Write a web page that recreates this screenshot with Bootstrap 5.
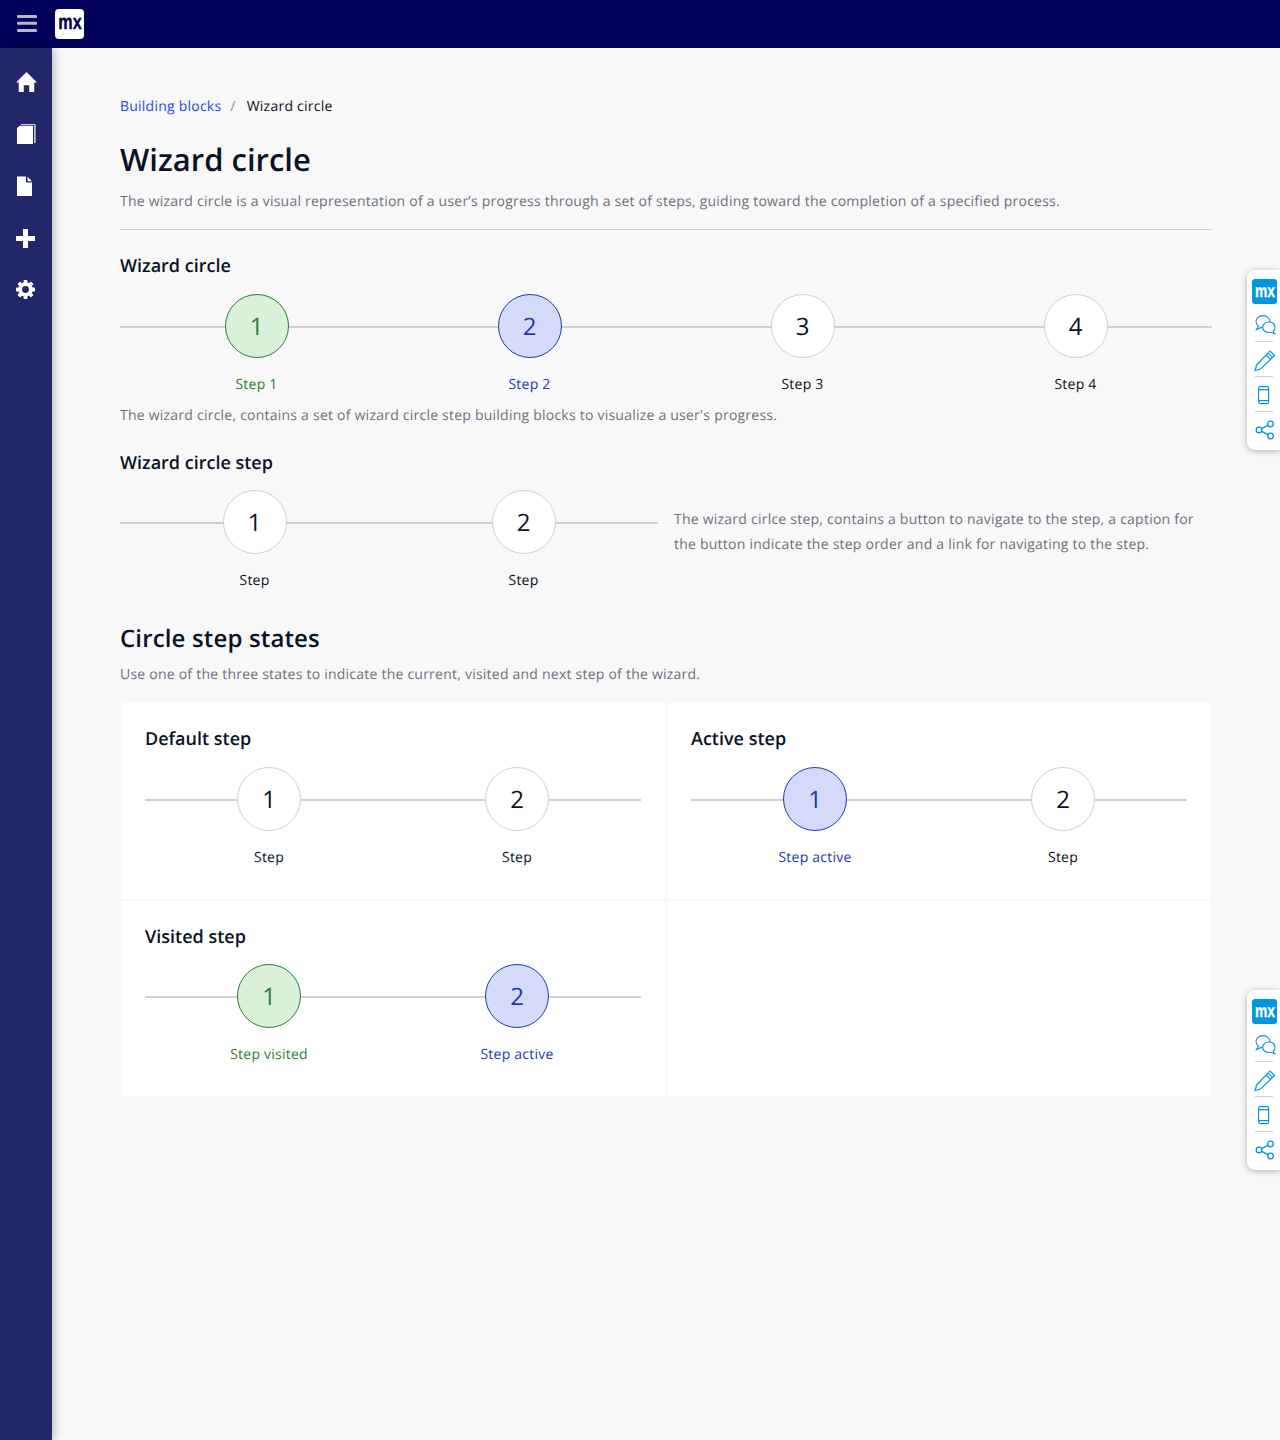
<!DOCTYPE html>
<html lang="en">
<head>
    <meta charset="UTF-8">
    <meta name="viewport" content="width=device-width, initial-scale=1.0">
    <title>Wizard circle</title>
    <link href="https://cdn.jsdelivr.net/npm/bootstrap@5.3.0/dist/css/bootstrap.min.css" rel="stylesheet">
    <style>
        body {
            margin: 0;
            background: #f8f8f8;
            color: #0a1325;
            font-family: "Open Sans", "Noto Sans", sans-serif;
            font-size: 14px;
            line-height: 1.5;
            letter-spacing: .23px;
            text-rendering: geometricPrecision;
        }
        .page-shell { min-height: 1440px; position: relative; overflow: hidden; }
        .top-strip { height: 48px; background: #02025a; }
        .top-strip .burger { width: 52px; padding: 15px 0 0 2px; }
        .logo-tile {
            width: 29px; height: 30px; margin: 9px 0 0 3px; overflow: hidden;
            background: #fff; border-radius: 4px; color: #02025a; text-align: center;
            font-family: "Liberation Sans", sans-serif; font-size: 21px; font-weight: 700; line-height: 27px;
            -webkit-text-stroke: .4px #02025a; letter-spacing: 0;
        }
        .logo-tile span, .mx-tile span { display: block; transform: scaleX(.77); }
        .body-row { min-height: 1392px; }
        .side-rail {
            width: 52px; flex: none; background: #24266a;
            box-shadow: 2px 0 10px rgba(0,0,0,.25); position: relative;
            padding-top: 8px;
        }
        .rail-item { height: 52.2px; display: flex; align-items: center; padding-left: 16px; }
        .main-area { flex: 1; padding: 48px 68px 0; min-width: 0; }
        .crumbs { margin-bottom: 23px; height: 21px; line-height: 21px; display: flex; }
        .crumbs a { color: #264ae5; text-decoration: none; }
        .crumbs .sep { color: #6c717e; margin: 0 8px; opacity: .8; padding: 0 1px; }
        .crumbs .sep + span { margin-left: 2px; }
        .page-title { font-size: 31px; font-weight: 600; line-height: 40px; margin: 0 0 11px; letter-spacing: 0; }
        .muted-text { color: #6c717e; margin: 0; }
        .intro { padding-bottom: 17px; border-bottom: 1px solid #ced0d3; margin-bottom: 24px; }
        .sub-title { font-size: 18px; font-weight: 600; line-height: 24px; margin: 0 0 16px; letter-spacing: 0; }
        .big-title { font-size: 24px; font-weight: 600; line-height: 31px; margin: 0; letter-spacing: .15px; }

        .wiz-row { display: flex; }
        .wiz-step { flex: 1 1 0; position: relative; display: flex; flex-direction: column; align-items: center; }
        .wiz-step::before {
            content: ""; position: absolute; left: 0; right: 0; top: 32px; height: 2px; background: #ced0d3;
        }
        .wiz-dot {
            position: relative; width: 64px; height: 64px; border-radius: 50%;
            background: #fff; border: 1px solid #ced0d3; color: #0a1325;
            font-size: 24px; line-height: 64px; text-align: center; letter-spacing: 0;
        }
        .wiz-label { margin-top: 16px; height: 21px; line-height: 21px; }
        .wiz-step.is-visited .wiz-dot { background: #d9f0d9; border-color: #2e7d32; color: #2e7d32; }
        .wiz-step.is-visited .wiz-label { color: #2e7d32; }
        .wiz-step.is-active .wiz-dot { background: #d4daf9; border-color: #1f3aa8; color: #1f3aa8; }
        .wiz-step.is-active .wiz-label { color: #1f3aa8; }

        .step-note { margin-top: 10px; margin-bottom: 25px; }
        .step-head { margin-bottom: 15px; }
        .step-block { margin-bottom: 32px; }
        .step-side { padding-top: 17px; line-height: 25px; }
        .states-note { margin-top: 10px; }

        .state-grid { display: grid; grid-template-columns: 1fr 1fr; gap: 2px; padding: 1px; margin-top: 17px; }
        .state-cell { background: #fff; padding: 24px 24px 0; }
        .cell-a { height: 196px; }
        .cell-b { height: 195px; }
        .cell-b .sub-title { margin-bottom: 15px; }

        .tool-float {
            position: absolute; right: 0; width: 33px; height: 180px;
            background: #fff; border-radius: 8px 0 0 8px;
            box-shadow: 0 1px 6px rgba(0,0,0,.3);
            padding: 9px 0 0 5px;
        }
        .tool-top { top: 270px; }
        .tool-bottom { top: 990px; }
        .mx-tile {
            display: block; width: 25px; height: 25px; background: #0595db; border-radius: 3px; color: #fff; overflow: hidden;
            font-family: "Liberation Sans", sans-serif; font-size: 18px; font-weight: 700; line-height: 25px; text-align: center;
            margin-bottom: 9px; letter-spacing: 0; -webkit-text-stroke: .3px #fff;
        }
        .tool-float svg { display: block; margin-bottom: 4px; }
        .tool-sep { width: 18px; height: 1px; background: #ced0d3; margin: 0 0 6px 3px; }
    </style>
</head>
<body>
<div class="page-shell">
    <!-- top bar -->
    <div class="top-strip d-flex align-items-start">
        <div class="burger d-flex justify-content-center">
            <svg width="20" height="17" viewBox="0 0 20 17" fill="#b4b6d2"><rect width="20" height="3" rx="1"/><rect y="6.8" width="20" height="3" rx="1"/><rect y="14" width="20" height="3" rx="1"/></svg>
        </div>
        <div class="logo-tile"><span>mx</span></div>
    </div>

    <div class="body-row d-flex">
        <!-- left rail -->
        <div class="side-rail">
            <div class="rail-item"><svg width="21" height="20" viewBox="0 0 23 21" fill="#fff" preserveAspectRatio="none"><path d="M11.5 0 L23 11 L20 11 L20 21 L14.5 21 L14.5 14 L8.5 14 L8.5 21 L3 21 L3 11 L0 11 Z"/></svg></div>
            <div class="rail-item"><svg width="20" height="21" viewBox="0 0 20 21" fill="#fff"><path d="M4 1.8 L17 1.8 L17 20 L1 20 L1 4 Z"/><path d="M5 .2 L19.5 .2 L19.5 19 L18.3 19 L18.3 1 L5 1 Z"/></svg></div>
            <div class="rail-item"><svg width="17" height="21" viewBox="0 0 17 21" fill="#fff"><path d="M1 .5 L10 .5 L10 6.5 L16 6.5 L16 20 L1 20 Z"/><path d="M11.5 .8 L16 5.2 L11.5 5.2 Z"/></svg></div>
            <div class="rail-item"><svg width="19" height="19" viewBox="0 0 19 19" fill="#fff"><path d="M7 0 H12 V7 H19 V12 H12 V19 H7 V12 H0 V7 H7 Z"/></svg></div>
            <div class="rail-item"><svg width="19" height="19" viewBox="0 0 20 20" style="margin-top:-3px"><g fill="#fff"><circle cx="10" cy="10" r="7.6"/><rect x="8" y="0" width="4" height="20" rx=".8"/><rect x="8" y="0" width="4" height="20" rx=".8" transform="rotate(45 10 10)"/><rect x="8" y="0" width="4" height="20" rx=".8" transform="rotate(90 10 10)"/><rect x="8" y="0" width="4" height="20" rx=".8" transform="rotate(135 10 10)"/></g><circle cx="10" cy="10" r="3.6" fill="#24266a"/></svg></div>
        </div>

        <!-- content -->
        <div class="main-area">
            <nav class="crumbs">
                <a href="#">Building blocks</a><span class="sep">/</span><span>Wizard circle</span>
            </nav>
            <h1 class="page-title">Wizard circle</h1>
            <p class="muted-text intro">The wizard circle is a visual representation of a user’s progress through a set of steps, guiding toward the completion of a specified process.</p>

            <h2 class="sub-title">Wizard circle</h2>
            <div class="wiz-row">
                <div class="wiz-step is-visited"><div class="wiz-dot">1</div><div class="wiz-label">Step 1</div></div>
                <div class="wiz-step is-active"><div class="wiz-dot">2</div><div class="wiz-label">Step 2</div></div>
                <div class="wiz-step"><div class="wiz-dot">3</div><div class="wiz-label">Step 3</div></div>
                <div class="wiz-step"><div class="wiz-dot">4</div><div class="wiz-label">Step 4</div></div>
            </div>
            <p class="muted-text step-note">The wizard circle, contains a set of wizard circle step building blocks to visualize a user's progress.</p>

            <h2 class="sub-title step-head">Wizard circle step</h2>
            <div class="row gx-3 step-block">
                <div class="col-6">
                    <div class="wiz-row">
                        <div class="wiz-step"><div class="wiz-dot">1</div><div class="wiz-label">Step</div></div>
                        <div class="wiz-step"><div class="wiz-dot">2</div><div class="wiz-label">Step</div></div>
                    </div>
                </div>
                <div class="col-6">
                    <p class="muted-text step-side">The wizard cirlce step, contains a button to navigate to the step, a caption for the button indicate the step order and a link for navigating to the step.</p>
                </div>
            </div>

            <h2 class="big-title">Circle step states</h2>
            <p class="muted-text states-note">Use one of the three states to indicate the current, visited and next step of the wizard.</p>

            <div class="state-grid">
                <div class="state-cell cell-a">
                    <h3 class="sub-title">Default step</h3>
                    <div class="wiz-row">
                        <div class="wiz-step"><div class="wiz-dot">1</div><div class="wiz-label">Step</div></div>
                        <div class="wiz-step"><div class="wiz-dot">2</div><div class="wiz-label">Step</div></div>
                    </div>
                </div>
                <div class="state-cell cell-a">
                    <h3 class="sub-title">Active step</h3>
                    <div class="wiz-row">
                        <div class="wiz-step is-active"><div class="wiz-dot">1</div><div class="wiz-label">Step active</div></div>
                        <div class="wiz-step"><div class="wiz-dot">2</div><div class="wiz-label">Step</div></div>
                    </div>
                </div>
                <div class="state-cell cell-b">
                    <h3 class="sub-title">Visited step</h3>
                    <div class="wiz-row">
                        <div class="wiz-step is-visited"><div class="wiz-dot">1</div><div class="wiz-label">Step visited</div></div>
                        <div class="wiz-step is-active"><div class="wiz-dot">2</div><div class="wiz-label">Step active</div></div>
                    </div>
                </div>
                <div class="state-cell cell-b"></div>
            </div>
        </div>
    </div>

    <!-- floating feedback tools -->
    <div class="tool-float tool-top">
        <span class="mx-tile"><span>mx</span></span>
        <svg width="24" height="24" viewBox="0 0 24 24" fill="#fff" stroke="#0595db" stroke-width="1.1"><path d="M6.5 13 C4.8 12 4 10.4 4 8.6 C4 5.2 7 2.6 11 2.6 C15 2.6 18 5.2 18 8.6 C18 12 15 14.6 11 14.6 C10.2 14.6 9.6 14.5 9 14.4 L4.5 16.5 Z"/><path d="M17 9 C20.5 9 23 11.3 23 14.2 C23 15.8 22.3 17.2 21 18.2 L22.8 20.8 L18.6 19.3 C18.1 19.4 17.6 19.5 17 19.5 C13.5 19.5 10.7 17.2 10.7 14.2 C10.7 11.3 13.5 9 17 9 Z"/></svg>
        <div class="tool-sep"></div>
        <svg width="24" height="24" viewBox="0 0 24 24" fill="none" stroke="#0595db" stroke-width="1.2"><path d="M4.5 17 L16 5 L20.5 9.5 L8.5 21 L3.2 22.5 Z"/><path d="M14 7 L18.5 11.5"/><path d="M16.5 4.5 L18 3 L22.5 7.5 L21 9"/></svg>
        <div class="tool-sep"></div>
        <svg width="24" height="24" viewBox="0 0 24 24" fill="none" stroke="#0595db" stroke-width="1.2"><rect x="6.6" y="3.6" width="10" height="17" rx="1.5"/><path d="M6.6 6.6 H16.6 M6.6 17.6 H16.6"/></svg>
        <div class="tool-sep"></div>
        <svg width="24" height="24" viewBox="0 0 24 24" fill="none" stroke="#0595db" stroke-width="1.3"><circle cx="7" cy="12" r="2.8"/><circle cx="18.5" cy="6" r="2.8"/><circle cx="18.5" cy="18" r="2.8"/><path d="M9.5 10.7 L16 7.3 M9.5 13.3 L16 16.7"/></svg>
    </div>
    <div class="tool-float tool-bottom">
        <span class="mx-tile"><span>mx</span></span>
        <svg width="24" height="24" viewBox="0 0 24 24" fill="#fff" stroke="#0595db" stroke-width="1.1"><path d="M6.5 13 C4.8 12 4 10.4 4 8.6 C4 5.2 7 2.6 11 2.6 C15 2.6 18 5.2 18 8.6 C18 12 15 14.6 11 14.6 C10.2 14.6 9.6 14.5 9 14.4 L4.5 16.5 Z"/><path d="M17 9 C20.5 9 23 11.3 23 14.2 C23 15.8 22.3 17.2 21 18.2 L22.8 20.8 L18.6 19.3 C18.1 19.4 17.6 19.5 17 19.5 C13.5 19.5 10.7 17.2 10.7 14.2 C10.7 11.3 13.5 9 17 9 Z"/></svg>
        <div class="tool-sep"></div>
        <svg width="24" height="24" viewBox="0 0 24 24" fill="none" stroke="#0595db" stroke-width="1.2"><path d="M4.5 17 L16 5 L20.5 9.5 L8.5 21 L3.2 22.5 Z"/><path d="M14 7 L18.5 11.5"/><path d="M16.5 4.5 L18 3 L22.5 7.5 L21 9"/></svg>
        <div class="tool-sep"></div>
        <svg width="24" height="24" viewBox="0 0 24 24" fill="none" stroke="#0595db" stroke-width="1.2"><rect x="6.6" y="3.6" width="10" height="17" rx="1.5"/><path d="M6.6 6.6 H16.6 M6.6 17.6 H16.6"/></svg>
        <div class="tool-sep"></div>
        <svg width="24" height="24" viewBox="0 0 24 24" fill="none" stroke="#0595db" stroke-width="1.3"><circle cx="7" cy="12" r="2.8"/><circle cx="18.5" cy="6" r="2.8"/><circle cx="18.5" cy="18" r="2.8"/><path d="M9.5 10.7 L16 7.3 M9.5 13.3 L16 16.7"/></svg>
    </div>
</div>
<script src="https://cdn.jsdelivr.net/npm/bootstrap@5.3.0/dist/js/bootstrap.bundle.min.js"></script>
</body>
</html>
